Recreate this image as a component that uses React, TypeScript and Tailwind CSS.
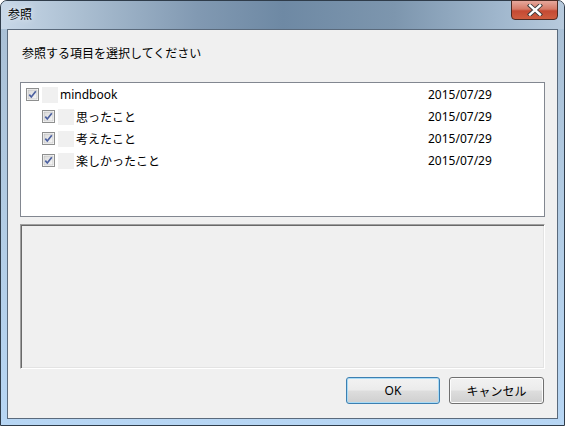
import React from "react";

const jp = { fontFamily: '"Noto Sans CJK JP", "Noto Sans", sans-serif' };
const lat = { fontFamily: '"Noto Sans", "Noto Sans CJK JP", sans-serif' };

function Check() {
  return (
    <svg width="13" height="13" viewBox="0 0 13 13" className="shrink-0">
      <defs>
        <linearGradient id="cbg" x1="0" y1="0" x2="1" y2="1">
          <stop offset="0" stopColor="#d9d9d9" />
          <stop offset="1" stopColor="#f7f7f7" />
        </linearGradient>
      </defs>
      <rect x="0.5" y="0.5" width="12" height="12" fill="#ffffff" stroke="#8e8f8f" />
      <rect x="2" y="2" width="9" height="9" fill="url(#cbg)" stroke="#b4b4b4" strokeWidth="0.6" />
      <path d="M3.3 6.6 L5.3 9 L9.8 3.3" fill="none" stroke="#4d61a0" strokeWidth="1.7" />
    </svg>
  );
}

function Row({ label, indent }: { label: string; indent: number }) {
  return (
    <div className="h-[22px] flex items-center pt-[1px]" style={{ paddingLeft: 5 + indent }}>
      <Check />
      <div className="w-[16px] h-[16px] bg-[#f0f0f0] ml-[3px] shrink-0" />
      <span className="ml-[2px] text-[12px] text-black leading-none w-[350px]" style={label === "mindbook" ? lat : jp}>
        {label}
      </span>
      <span className="text-[12px] text-black leading-none absolute left-[407px]" style={lat}>
        2015/07/29
      </span>
    </div>
  );
}

export default function App() {
  return (
    <div className="w-[565px] h-[426px] relative overflow-hidden bg-white">
      <div className="absolute inset-0 rounded-t-[7px] border border-[#2f3c4a] bg-[linear-gradient(180deg,#a9bfd4_0%,#b2cce4_50%,#b7d6f4_100%)] flex flex-col">
        <div className="h-[28px] shrink-0 relative rounded-t-[6px] bg-[linear-gradient(90deg,#c8d8e8_0%,#a9bdd0_15%,#8199b2_35%,#6e89a4_50%,#7d96ae_70%,#9fb6cc_88%,#b7cadd_100%)]">
          <span className="absolute left-[7px] top-[7px] text-[12px] leading-none text-black [text-shadow:0_0_6px_rgba(255,255,255,0.9)]" style={jp}>
            参照
          </span>
          <div className="absolute right-[6px] top-[-1px] w-[47px] h-[20px] rounded-b-[4px] border border-[#4d2a22] bg-[linear-gradient(180deg,#e6a89c_0%,#d67a67_45%,#c44a33_55%,#cf5d3f_100%)] flex items-center justify-center">
            <svg width="16" height="12" viewBox="0 0 16 12">
              <path d="M3 1.5 L13 10.5 M13 1.5 L3 10.5" stroke="#3a3a3a" strokeWidth="4.2" strokeLinecap="square" />
              <path d="M3 1.5 L13 10.5 M13 1.5 L3 10.5" stroke="#ffffff" strokeWidth="2.4" strokeLinecap="square" />
            </svg>
          </div>
        </div>
        <div className="flex-1 mx-[6px] mb-[6px] border border-[#5a6a7c] bg-[#f0f0f0] flex flex-col px-[12px]">
          <div className="pt-[15px] pl-[2px] h-[16px] box-content text-[12px] leading-[16px] text-black" style={jp}>
            参照する項目を選択してください
          </div>
          <div className="mt-[21px] h-[135px] border border-[#828790] bg-white relative">
            <Row label="mindbook" indent={0} />
            <Row label="思ったこと" indent={16} />
            <Row label="考えたこと" indent={16} />
            <Row label="楽しかったこと" indent={16} />
          </div>
          <div className="mt-[7px] h-[145px] border border-t-[#a0a0a0] border-l-[#a0a0a0] border-r-white border-b-white shadow-[inset_1px_1px_0_#696969,inset_-1px_-1px_0_#e3e3e3] bg-[#f0f0f0]" />
          <div className="flex justify-end gap-[9px] mt-[8px] pr-[1px]">
            <button className="w-[94px] h-[27px] rounded-[3px] border border-[#3c7fb1] shadow-[inset_0_0_0_1px_#a9dbf6] bg-[linear-gradient(180deg,#f2f2f2_0%,#ebebeb_48%,#dddddd_52%,#cfcfcf_100%)] text-[12px] text-black" style={lat}>
              OK
            </button>
            <button className="w-[95px] h-[27px] rounded-[3px] border border-[#707070] shadow-[inset_0_0_0_1px_#fcfcfc] bg-[linear-gradient(180deg,#f2f2f2_0%,#ebebeb_48%,#dddddd_52%,#cfcfcf_100%)] text-[12px] text-black" style={jp}>
              キャンセル
            </button>
          </div>
        </div>
      </div>
    </div>
  );
}
